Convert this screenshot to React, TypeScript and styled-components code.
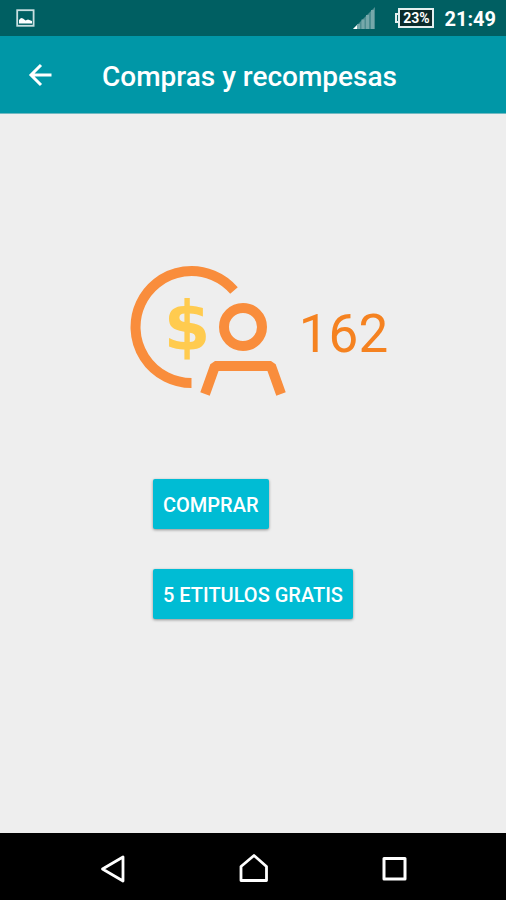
import React from "react";
import styled, { createGlobalStyle } from "styled-components";

const GlobalStyle = createGlobalStyle`
  *, *::before, *::after { box-sizing: border-box; }
  body {
    margin: 0;
    background: #eeeeee;
    font-family: Roboto, "Liberation Sans", sans-serif;
  }
  button { font-family: inherit; cursor: pointer; }
  svg { display: block; flex: none; }
`;

const Screen = styled.div`
  display: flex;
  flex-direction: column;
  min-height: 100vh;
`;

const StatusBar = styled.div`
  display: flex;
  align-items: center;
  height: 36px;
  padding: 0 10px 0 16px;
  background: #005f62;
  color: #ffffff;
`;

const StatusGroup = styled.div`
  display: flex;
  align-items: center;
  margin-left: auto;
`;

const Battery = styled.div`
  display: flex;
  align-items: center;
  margin: 0 10px 0 20px;
`;

const BatteryTip = styled.span`
  width: 3px;
  height: 10px;
  border: 2px solid #e4efef;
  border-right: 0;
`;

const BatteryBody = styled.span`
  width: 36px;
  height: 20px;
  border: 2px solid #e4efef;
  background: #0b2b2c;
  font-size: 14px;
  font-weight: 700;
  line-height: 16px;
  text-align: center;
`;

const Clock = styled.time`
  font-size: 20px;
  font-weight: 700;
  line-height: 24px;
  padding-top: 2px;
`;

const AppBar = styled.header`
  display: flex;
  align-items: center;
  gap: 48px;
  height: 78px;
  padding: 0 26px;
  background: #0097a7;
  border-bottom: 1px solid #72b9c1;
  color: #ffffff;
`;

const IconButton = styled.button`
  display: flex;
  align-items: center;
  justify-content: center;
  padding: 0;
  border: 0;
  background: transparent;
  color: inherit;
`;

const Title = styled.h1`
  margin: 0;
  padding-top: 4px;
  font-size: 28px;
  font-weight: 500;
  line-height: 32px;
  white-space: nowrap;
`;

const Content = styled.main`
  flex: 1;
  display: flex;
  flex-direction: column;
  align-items: center;
  padding: 151px 16px 40px;
`;

const Balance = styled.div`
  display: flex;
  align-items: center;
  gap: 12px;
  padding-left: 12px;
`;

const Amount = styled.span`
  padding-top: 6px;
  color: #f58220;
  font-size: 53px;
  font-weight: 400;
  line-height: 64px;
`;

const Actions = styled.div`
  display: flex;
  flex-direction: column;
  align-items: flex-start;
  gap: 40px;
  margin-top: 82px;
`;

const ActionButton = styled.button`
  height: 50px;
  padding: 2px 10px 0;
  border: 0;
  border-radius: 2px;
  background: #00bcd4;
  box-shadow: 0 1px 3px rgba(0, 0, 0, 0.4);
  color: #ffffff;
  font-size: 20px;
  font-weight: 500;
  line-height: 24px;
  text-transform: uppercase;
  white-space: nowrap;
`;

const NavBar = styled.nav`
  display: flex;
  align-items: center;
  justify-content: space-between;
  height: 67px;
  padding: 2px 96px 0;
  background: #000000;
  color: #ffffff;
`;

const PictureIcon = () => (
  <svg width="19" height="18" viewBox="0 0 19 18" aria-hidden="true">
    <rect x="1.2" y="1.2" width="16.4" height="15.6" fill="none" stroke="#c8dfe0" strokeWidth="1.8" />
    <path d="M3 14.5V11l2-2 2 .5L9.500 11.500l2.500-1 4 1.500v2.500Z" fill="#ffffff" />
  </svg>
);

const SignalIcon = () => (
  <svg width="22" height="22" viewBox="0 0 22 22" aria-hidden="true">
    <path d="M0 22 22 0v22Z" fill="#4d8d90" />
    <path d="M5.500 17v5M10 12.500V22M14.500 8v14M19.500 3v19" stroke="#76a8aa" strokeWidth="3" />
    <path d="M0 22 4 18v4Z" fill="#ffffff" />
  </svg>
);

const BackArrowIcon = () => (
  <svg width="28" height="28" viewBox="0 0 28 28" fill="none" stroke="currentColor" strokeWidth="3" aria-hidden="true">
    <path d="M25.500 14H5M15 4 5 14l10 10" />
  </svg>
);

const CoinPersonIcon = () => (
  <svg width="157" height="132" viewBox="0 0 157 132" role="img" aria-label="Etitulos">
    <g fill="none" stroke="#f98d3c" strokeWidth="10">
      <path d="M61.5 118A56 56 0 1 1 104 25.5" />
      <circle cx="113" cy="62" r="19" />
      <path d="M75 129 85 101H141L151 129" strokeLinejoin="bevel" />
    </g>
    <text
      x="57"
      y="85"
      textAnchor="middle"
      fill="#ffcb4f"
      fontFamily="'DejaVu Sans', sans-serif"
      fontWeight="700"
      fontSize="67"
    >
      $
    </text>
  </svg>
);

const NavBackIcon = () => (
  <svg width="34" height="34" viewBox="0 0 34 34" fill="none" stroke="currentColor" strokeWidth="2.8" strokeLinejoin="round" aria-hidden="true">
    <path d="M27 6V30L6.500 18Z" />
  </svg>
);

const NavHomeIcon = () => (
  <svg width="34" height="34" viewBox="0 0 34 34" fill="none" stroke="currentColor" strokeWidth="2.8" strokeLinejoin="round" aria-hidden="true">
    <path d="M5 29.500V15.500L18 4.500 30.500 15.500V29.500Z" />
  </svg>
);

const NavRecentIcon = () => (
  <svg width="34" height="34" viewBox="0 0 34 34" fill="none" stroke="currentColor" strokeWidth="3" strokeLinejoin="round" aria-hidden="true">
    <rect x="8" y="7.500" width="21" height="20.500" />
  </svg>
);

export default function App() {
  return (
    <Screen>
      <GlobalStyle />
      <StatusBar>
        <PictureIcon />
        <StatusGroup>
          <SignalIcon />
          <Battery>
            <BatteryTip />
            <BatteryBody>23%</BatteryBody>
          </Battery>
          <Clock>21:49</Clock>
        </StatusGroup>
      </StatusBar>
      <AppBar>
        <IconButton type="button" aria-label="Volver">
          <BackArrowIcon />
        </IconButton>
        <Title>Compras y recompesas</Title>
      </AppBar>
      <Content>
        <Balance>
          <CoinPersonIcon />
          <Amount>162</Amount>
        </Balance>
        <Actions>
          <ActionButton type="button">Comprar</ActionButton>
          <ActionButton type="button">5 etitulos gratis</ActionButton>
        </Actions>
      </Content>
      <NavBar>
        <IconButton type="button" aria-label="Atrás">
          <NavBackIcon />
        </IconButton>
        <IconButton type="button" aria-label="Inicio">
          <NavHomeIcon />
        </IconButton>
        <IconButton type="button" aria-label="Recientes">
          <NavRecentIcon />
        </IconButton>
      </NavBar>
    </Screen>
  );
}
